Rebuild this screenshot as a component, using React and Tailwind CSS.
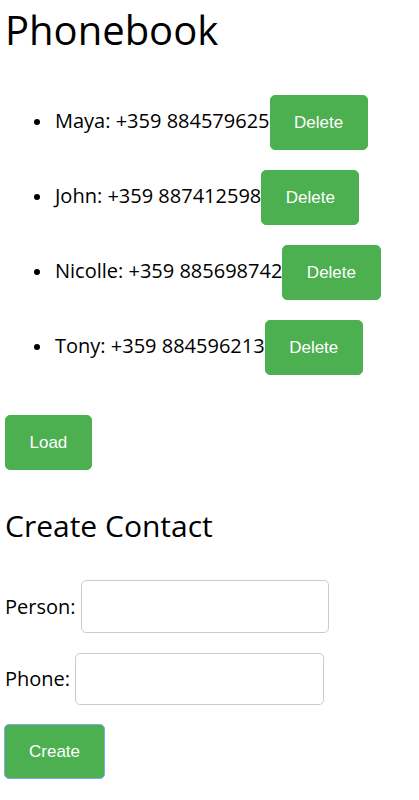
import React from "react";

const contacts = [
  ["Maya", "+359 884579625"],
  ["John", "+359 887412598"],
  ["Nicolle", "+359 885698742"],
  ["Tony", "+359 884596213"],
];

function GreenButton({ children, focused }) {
  return (
    <button
      className={
        "block shrink-0 rounded-[5px] bg-[#4CAF50] py-[17px] text-[17px] leading-[19px] text-white border " +
        (focused ? "border-[#7eaaf0] w-[101px] text-center" : "border-[#4CAF50] px-[23.5px]")
      }
      style={{ fontFamily: '"Liberation Sans", Arial, sans-serif' }}
    >
      {children}
    </button>
  );
}

export default function App() {
  return (
    <div
      className="bg-white text-black px-[5px] pb-[20px]"
      style={{ fontFamily: '"Open Sans", "Noto Sans", sans-serif' }}
    >
      <h1 className="mt-[3px] text-[40px] leading-[54px] font-normal">Phonebook</h1>
      <ul className="mt-[38px] flex flex-col gap-[20px] pl-[29px]">
        {contacts.map(([name, phone]) => (
          <li key={name} className="flex items-baseline text-[20px]">
            <span className="w-[6px] h-[6px] rounded-full bg-black mr-[15px] shrink-0 relative top-[-3px]" />
            <span className="whitespace-nowrap">
              {name}: {phone}
            </span>
            <GreenButton>Delete</GreenButton>
          </li>
        ))}
      </ul>
      <div className="mt-[40px] flex">
        <GreenButton>Load</GreenButton>
      </div>
      <h2 className="mt-[35px] text-[30px] leading-[41px] font-normal">Create Contact</h2>
      <div className="mt-[34px] flex items-center gap-[5px] text-[20px]">
        <label>Person:</label>
        <input className="w-[248px] h-[53px] border border-[#ccc] rounded-[5px] px-[10px]" />
      </div>
      <div className="mt-[20px] flex items-center gap-[5px] text-[20px]">
        <label>Phone:</label>
        <input className="w-[249px] h-[52px] border border-[#ccc] rounded-[5px] px-[10px]" />
      </div>
      <div className="mt-[19px] flex -ml-[1px]">
        <GreenButton focused>Create</GreenButton>
      </div>
    </div>
  );
}
